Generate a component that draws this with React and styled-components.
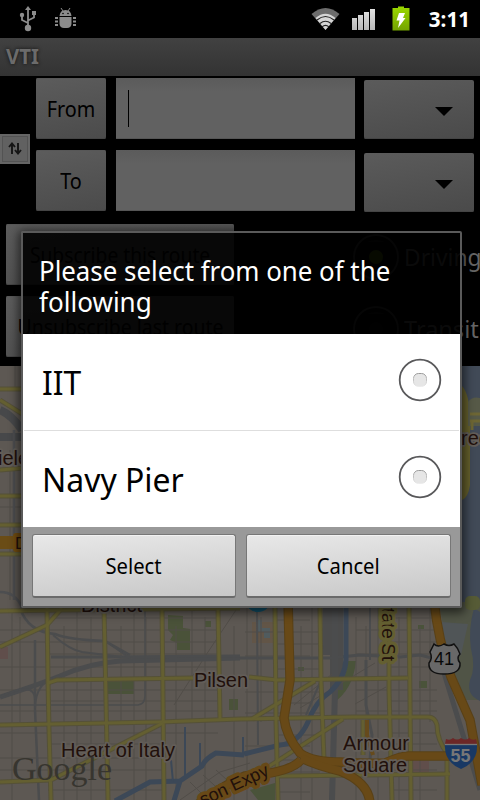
import React from "react";
import styled, { createGlobalStyle } from "styled-components";

const Global = createGlobalStyle`
  * { box-sizing: border-box; }
  body { margin: 0; background: #000; overflow: hidden; }
`;

const Screen = styled.div`
  position: relative;
  width: 480px;
  height: 800px;
  overflow: hidden;
  display: flex;
  flex-direction: column;
  background: #000;
  font-family: "Noto Sans", "Open Sans", sans-serif;
  color: #000;
`;

const Fit = styled.span`
  display: inline-block;
  white-space: nowrap;
  transform: scaleX(${(p) => p.$x});
  transform-origin: ${(p) => p.$from || "center"};
`;

const StatusBar = styled.header`
  height: 38px;
  flex: none;
  display: flex;
  justify-content: space-between;
`;

const StatusIcons = styled.svg`
  display: block;
  width: ${(p) => p.$w}px;
  height: 38px;
`;

const StatusRight = styled.div`
  display: flex;
  padding-right: 10px;
`;

const Clock = styled.time`
  width: 42px;
  color: #fff;
  font-size: 21px;
  font-weight: 700;
  line-height: 38px;
  display: flex;
  justify-content: flex-end;
`;

const TitleBar = styled.div`
  height: 38px;
  flex: none;
  padding-left: 6px;
  background: linear-gradient(#414141, #333);
  color: #6b6b6b;
  font-size: 21px;
  font-weight: 700;
  line-height: 37px;
  text-shadow: 0 0 4px #111;
`;

const RouteForm = styled.section`
  height: 290px;
  flex: none;
  display: flex;
  flex-direction: column;
`;

const Endpoints = styled.div`
  display: flex;
  height: 148px;
`;

const SwapColumn = styled.div`
  width: 36px;
  padding-top: 58px;
`;

const SwapButton = styled.div`
  width: 30px;
  height: 30px;
  padding: 2px;
  background: #656565;
  svg {
    display: block;
    width: 26px;
    height: 26px;
    border: 1px solid #535353;
    background: #616161;
  }
`;

const EndpointRows = styled.div`
  flex: 1;
  padding-top: 2px;
  display: flex;
  flex-direction: column;
  gap: 11px;
`;

const EndpointRow = styled.div`
  display: grid;
  grid-template-columns: 70px 239px 109px;
  column-gap: 10px;
  height: 61px;
`;

const DimButton = styled.div`
  display: flex;
  align-items: center;
  justify-content: center;
  height: 61px;
  border-radius: 2px;
  background: linear-gradient(170deg, #5c5c5c, #4b4b4b);
  box-shadow: inset 0 -1px #444, inset 0 1px #575757;
  font-size: 22px;
  line-height: 30px;
  padding-bottom: 1px;
`;

const Input = styled.div`
  height: 61px;
  padding: 12px 12px;
  background: linear-gradient(#5b5b5b, #616161 14px);
  border-bottom: 1px solid #555;
`;

const Caret = styled.div`
  width: 1px;
  height: 37px;
  background: #000;
`;

const Dropdown = styled.div`
  display: flex;
  justify-content: flex-end;
  align-items: center;
  height: 59px;
  margin: ${(p) => p.$top}px 0 0 -1px;
  padding: 4px 21px 0 0;
  border-radius: 2px;
  background: linear-gradient(170deg, #5b5b5b, #4a4a4a);
  box-shadow: inset 0 -1px #444;
  svg { width: 18px; height: 9px; display: block; }
`;

const Options = styled.div`
  display: grid;
  grid-template-columns: 228px 1fr;
  column-gap: 119px;
  row-gap: 11px;
  padding-left: 6px;
  align-content: start;
`;

const ModeOption = styled.div`
  display: flex;
  align-items: center;
  gap: 5px;
  padding-top: 4px;
  font-size: 24px;
  color: #666;
  white-space: nowrap;
  svg { width: 46px; height: 46px; flex: none; }
`;

const MapView = styled.svg`
  display: block;
  width: 480px;
  height: 434px;
  flex: none;
`;

const Dialog = styled.div`
  position: absolute;
  left: 21px;
  top: 231px;
  width: 441px;
  height: 377px;
  border: 2px solid #5a5a5a;
  border-radius: 2px;
  box-shadow: 0 2px 10px 3px rgba(0, 0, 0, 0.55);
  display: flex;
  flex-direction: column;
`;

const DialogTitle = styled.h1`
  margin: 0;
  height: 101px;
  padding: 22px 16px 0;
  background: rgba(0, 0, 0, 0.9);
  color: #fff;
  font-size: 27px;
  font-weight: 400;
  line-height: 31px;
`;

const TitleLine = styled.div`
  height: 31px;
`;

const Choices = styled.div`
  flex: none;
  padding: 0 1px;
  background: #fff;
`;

const Choice = styled.div`
  height: ${(p) => p.$h}px;
  display: flex;
  align-items: center;
  justify-content: space-between;
  padding: 0 17px 4px 18px;
  font-size: 33px;
  line-height: 40px;
  border-bottom: ${(p) => (p.$line ? "1px solid #dedede" : "0")};
  svg { width: 44px; height: 44px; }
  ${Fit} { margin-top: 6px; }
`;

const Actions = styled.div`
  flex: 1;
  display: grid;
  grid-template-columns: 204px 205px;
  column-gap: 10px;
  padding: 7px 9px;
  background: #999;
`;

const ActionButton = styled.button`
  height: 64px;
  margin: 0;
  padding: 0 0 1px;
  border: 1px solid #777;
  border-bottom: 2px solid #6a6a6a;
  border-radius: 3px;
  background: linear-gradient(175deg, #e8e8e8, #c8c8c8);
  box-shadow: inset 0 1px #f2f2f2;
  font-family: inherit;
  font-size: 22px;
  color: #000;
`;

const Radio = () => (
  <svg viewBox="0 0 44 44">
    <defs>
      <linearGradient id="rim" x2="0" y2="1">
        <stop stopColor="#999" />
        <stop offset="1" stopColor="#ececec" />
      </linearGradient>
    </defs>
    <circle cx="22" cy="22" r="20.3" fill="#fff" stroke="#58585a" strokeWidth="1.8" />
    <rect x="15.500" y="15.500" width="13" height="13" rx="5" fill="#e6e6e6" stroke="url(#rim)" />
  </svg>
);

const DimRadio = ({ on }) => (
  <svg viewBox="0 0 46 46">
    <circle cx="23" cy="23" r="22" fill="#000" stroke="#3c3c3c" strokeWidth="2" />
    <path d="M14 8q9-4 18 0z" fill="#181818" />
    <circle cx="23" cy="23" r="7" fill={on ? "#4b6500" : "#111"} />
  </svg>
);

const Arrow = () => (
  <svg viewBox="0 0 18 9"><path d="M0 0h18L9 9z" fill="#000" /></svg>
);

const STREETS_V = [12, 20, 64, 77, 91, 121, 134, 146, 176, 192, 205, 234, 247, 261, 301, 312, 356, 366, 378, 399, 420, 430];
const STREETS_H = [618, 630, 642, 654, 667, 690, 701, 711, 733, 744, 758, 770, 790];
const MAJOR = [
  "M47 608L48 680L49 730L51 800", "M104 608L106 700L108 800", "M162 608L163 700L164 800", "M218 608L220 720",
  "M0 611L60 610L240 608", "M48 683L57 680L193 678", "M0 725L160 722L240 719L353 717H428Q435 717 437 725Q437 740 447 753",
  "M0 782L51 780L163 723", "M0 647L47 625L62 608", "M275 608L276 720L278 800", "M320 608L321 680L324 760",
  "M389 608V690L392 800", "M409 608L410 700L411 800", "M249 677L277 680L408 678", "M279 776L450 774M447 755V800",
  "M252 719L315 681", "M268 767L343 719", "M363 720V755",
  "M0 389H24M0 400L24 415M0 470L24 468M0 496H24M0 525H24M0 554H24",
];
const FREEWAY = [
  "M288 600L290 680L284 718Q286 736 300 753Q312 762 340 762Q365 764 385 763Q402 755 410 756H454",
  "M190 810Q225 784 245 776Q290 773 301 760", "M301 758Q318 766 340 771Q370 783 370 805",
  "M434 600Q438 640 451 677L470 720L482 785",
];
const RAIL = [
  ["M0 697Q35 686 60 676Q90 663 120 661L240 658", 5],
  ["M51 657H105L240 656", 3], ["M20 608Q28 632 55 634Q70 640 105 641L130 655", 2.5],
  ["M53 635Q70 650 82 652L130 658L105 641", 2], ["M35 640V710L39 800", 2.5],
  ["M0 697Q35 680 35 700M35 710Q35 680 60 676", 1.8], ["M0 705L138 705Q145 704 145 696V608", 1.6],
  ["M240 658L330 658L360 655L400 657L420 655L440 660", 3],
  ["M335 600V690L332 800", 6], ["M366 660V705L372 735L370 760", 3], ["M440 660L480 790", 5],
  ["M257 610L258 745M321 680L306 715M370 600V660", 2],
];

const Label = ({ x, y, children, size = 20, ...rest }) => (
  <text x={x} y={y} fontFamily="Liberation Sans, Arial, sans-serif" fontSize={size} fill="#21100b"
    stroke="#625d58" strokeWidth="3.5" strokeLinejoin="round" paintOrder="stroke" {...rest}>{children}</text>
);

const CityMap = () => (
  <MapView viewBox="0 366 480 434">
    <rect y="366" width="480" height="434" fill="#5d5853" />
    <path d="M438 600H480V700H466L452 668Q445 640 440 608z" fill="#505446" />
    <path d="M441 622L468 624L461 655L448 660z" fill="#505557" />
    <path d="M474 608L480 612V701Q466 695 470 680Q476 668 471 649Q468 630 474 608z" fill="#414a57" />
    <rect x="461" y="366" width="19" height="236" fill="#414a57" />
    <path d="M462 386Q470 395 470 420V485Q468 498 462 500z" fill="#645f2c" />
    <path d="M468 402Q472 396 480 398V426H468z" fill="#565947" />
    <path d="M470 414H480M470 421H480M472 430V422" stroke="#6d6634" strokeWidth="3" />
    <rect x="465" y="596" width="15" height="14" rx="5" fill="#565b36" />
    <path d="M168 615L183 616V628L190 629V650H177V643L170 640L173 635L168 630z M108 681H134V694H108z M229 699H238V710H229z M205 621H211V627H205z" fill="#4a5239" />
    <path d="M348 661H356Q353 690 333 703L337 690Q346 680 348 661z M298 667H304V671H298z M419 681H427V688H419z M418 625H424V629H418z M250 790L275 783V800H258z" fill="#4a533a" />
    <path d="M252 622H275V643H252z" fill="#625547" />
    <path d="M258 620H262V628H270V638H264V632H258z" fill="#505b5e" />
    <path d="M413 761H429V772H413z M0 647H8V659H0z" fill="#604e4b" />
    <path d="M323 608H343V690H330V655H321z" fill="#4b4b4b" />

    <g stroke="#514d48" strokeWidth="1">
      {STREETS_V.map((x, i) => <path key={x} d={`M${x} ${608 + (i % 3) * 9}V${i % 4 === 1 ? 722 : 800}`} />)}
      {STREETS_H.map((y, i) => <path key={y} d={`M${i % 3 ? 0 : 48} ${y}H${i > 8 ? 164 : 218}M${i % 2 ? 245 : 277} ${y + 2}H${i % 3 ? 320 : 310}M${i % 2 ? 356 : 390} ${y}H437`} />)}
      <path d="M174 705L206 655L236 610M300 708L375 663M294 705L337 670M355 704L386 687M180 800L220 772L250 763M190 782L208 800M203 775L225 795M216 770L237 789M0 440H22M0 507H22M10 450V600M0 543H22M15 366V390" fill="none" />
    </g>
    <path d="M0 410Q12 415 22 430M0 437H22" stroke="#47484a" strokeWidth="8" fill="none" />
    <path d="M14 430V600M0 592Q16 592 22 608" stroke="#4d4e50" strokeWidth="2.5" fill="none" />

    {RAIL.map(([d, w]) => <path key={d} d={d} fill="none" stroke="#4b4c4d" strokeWidth={w} />)}

    <g fill="none" stroke="#3c4857">
      <path d="M346 600V660Q345 678 330 692Q315 702 308 722Q298 744 280 745L244 754" strokeWidth="5" />
      <path d="M244 755L216 753Q205 759 202 766L180 781L173 804M115 801L150 782L180 781" strokeWidth="5" />
      <path d="M185 727V778M200 743V766M171 760L173 782M243 737V754" strokeWidth="2" />
    </g>

    <g fill="none" stroke="#555138" strokeWidth="5">{MAJOR.map((d) => <path key={d} d={d} />)}</g>
    <g fill="none" stroke="#645f31" strokeWidth="3">{MAJOR.map((d) => <path key={d} d={d} />)}</g>
    <g fill="none" stroke="#594117" strokeWidth="9.500">{FREEWAY.map((d) => <path key={d} d={d} />)}</g>
    <g fill="none" stroke="#684917" strokeWidth="7.500">{FREEWAY.map((d) => <path key={d} d={d} />)}</g>
    <path d="M367 720V735L373 755" stroke="#664a1c" strokeWidth="4" fill="none" />

    <Label x="-2" y="465">iele</Label>
    <Label x="461" y="445">ree</Label>
    <path d="M0 536H24V549H0z" fill="#6a4c16" />
    <rect x="13" y="533" width="20" height="19" rx="3" fill="#724d11" />
    <Label x="15" y="549" size="17" strokeWidth="0">D</Label>
    <Label x="81" y="612" textLength="61">District</Label>
    <circle cx="258" cy="599" r="13" fill="#11526b" />
    <Label x="194" y="687" textLength="54">Pilsen</Label>
    <Label x="61" y="757" textLength="114">Heart of Italy</Label>
    <Label x="343" y="750" textLength="66">Armour</Label>
    <Label x="343" y="772" textLength="64">Square</Label>
    <Label size="19" transform="translate(382 608) rotate(90)" x="0" y="0" stroke="#645f31" strokeWidth="7" textLength="53">tate St</Label>
    <Label size="18" transform="translate(203 806) rotate(-25)" x="0" y="0" stroke="#684917" strokeWidth="7">son Expy</Label>

    <path d="M434 644Q438 648 444 644Q449 647 454 644Q458 648 460 654Q456 658 460 663Q461 674 444 674Q428 674 429 663Q433 658 430 652z" fill="#686868" stroke="#111" strokeWidth="1.5" />
    <Label x="434" y="665" size="18" strokeWidth="0" fill="#080808">41</Label>
    <path d="M446 739Q450 741 453 738Q457 741 461 738Q466 741 469 738Q473 741 476 739L477 744H445z" fill="#6c2727" />
    <path d="M445 745H477Q478 762 461 769Q444 762 445 745z" fill="#183864" />
    <path d="M445 744.5H477" stroke="#777" strokeWidth="1.3" />
    <Label x="450.500" y="762" size="18" fontWeight="700" fill="#777" strokeWidth="0">55</Label>
    <text x="12" y="780" fontFamily="Liberation Serif, Times New Roman, serif" fontSize="34" fill="#37352f" textLength="100" lengthAdjust="spacingAndGlyphs">Google</text>
  </MapView>
);

const LeftStatus = () => (
  <StatusIcons $w={90} viewBox="0 0 90 38">
    <g stroke="#8c8c8c" fill="none" strokeWidth="1.8">
      <path d="M28 28V8M28 23L22 20V15M28 20.500L34 17.500V13" />
    </g>
    <g fill="#8c8c8c">
      <circle cx="28" cy="28" r="3.200" /><path d="M28 6l-3 4h6z" /><circle cx="22" cy="15" r="2.200" /><path d="M32 11h4v4h-4z" />
      <path d="M59.500 16Q60 10 65.500 10Q71 10 71.500 16z" />
      <path d="M59.500 17H71.500V24Q71 28 67 28H64Q60 28 59.500 24z" />
      <path d="M55 17h3v2h-3zM55 20.500h3v2h-3zM55 24h3v2h-3zM73 17h3v2h-3zM73 20.500h3v2h-3zM73 24h3v2h-3z" />
    </g>
    <path d="M61 8l2 3M70 8l-2 3" stroke="#8c8c8c" />
    <circle cx="63" cy="13.500" r=".8" /><circle cx="68" cy="13.500" r=".8" />
  </StatusIcons>
);

const RightStatus = () => (
  <StatusIcons $w={118} viewBox="310 0 118 38">
    <defs>
      <linearGradient id="bat" x2="0" y2="1"><stop stopColor="#9bd800" /><stop offset="1" stopColor="#73a300" /></linearGradient>
      <linearGradient id="sig" x2="0" y2="1"><stop stopColor="#e2e2e2" /><stop offset="1" stopColor="#b8b8b8" /></linearGradient>
    </defs>
    <path d="M325.500 30L311.500 14Q325.500 2 339.500 14z" fill="#6c6c6c" />
    <path d="M325.500 30L315.500 18Q325.500 9.500 335.500 18z" fill="#d5d5d5" />
    <path d="M317 20Q325.500 13 334 20M320 23.500Q325.500 19 331 23.500M322 27Q325.500 23.800 329 27" fill="none" stroke="#222" strokeWidth="1.1" />
    <path d="M352 18h5v12h-5zM358 15h5v15h-5zM364 12h5v18h-5zM370 9h5v21h-5z" fill="url(#sig)" />
    <path d="M393 8h5V6.500h6V8h5.500v22.500h-17V8z" fill="url(#bat)" />
    <path d="M399 13h6l-2 5h2.500l-7.500 10 1.500-7.500h-3z" fill="#fff" />
  </StatusIcons>
);

const ENDPOINTS = [
  { name: "From", focused: true, top: 2 },
  { name: "To", focused: false, top: 3 },
];

export default function App() {
  return (
    <Screen>
      <Global />
      <StatusBar>
        <LeftStatus />
        <StatusRight>
          <RightStatus />
          <Clock><Fit $x={0.98} $from="right">3:11</Fit></Clock>
        </StatusRight>
      </StatusBar>
      <TitleBar><Fit $x={0.97} $from="left">VTI</Fit></TitleBar>
      <RouteForm>
        <Endpoints>
          <SwapColumn>
            <SwapButton>
              <svg viewBox="0 0 24 24"><path d="M9 17V7M6 10L9 6.500L12 10M15 6V16M12 13L15 16.500L18 13" fill="none" stroke="#151515" strokeWidth="1.9" /></svg>
            </SwapButton>
          </SwapColumn>
          <EndpointRows>
            {ENDPOINTS.map((e) => (
              <EndpointRow key={e.name}>
                <DimButton><Fit $x={0.9}>{e.name}</Fit></DimButton>
                <Input>{e.focused && <Caret />}</Input>
                <Dropdown $top={e.top}><Arrow /></Dropdown>
              </EndpointRow>
            ))}
          </EndpointRows>
        </Endpoints>
        <Options>
          <DimButton><Fit $x={0.875}>Subscribe this route</Fit></DimButton>
          <ModeOption><DimRadio on /><Fit $x={0.95} $from="left">Driving</Fit></ModeOption>
          <DimButton><Fit $x={0.885}>Unsubscribe last route</Fit></DimButton>
          <ModeOption><DimRadio /><Fit $x={0.98} $from="left">Transit</Fit></ModeOption>
        </Options>
      </RouteForm>
      <CityMap />
      <Dialog role="dialog">
        <DialogTitle>
          <TitleLine><Fit $x={0.957} $from="left">Please select from one of the</Fit></TitleLine>
          <TitleLine><Fit $x={0.965} $from="left">following</Fit></TitleLine>
        </DialogTitle>
        <Choices>
          <Choice $h={97} $line><Fit $x={0.965} $from="left">IIT</Fit><Radio /></Choice>
          <Choice $h={96}><Fit $x={0.968} $from="left">Navy Pier</Fit><Radio /></Choice>
        </Choices>
        <Actions>
          <ActionButton><Fit $x={0.92}>Select</Fit></ActionButton>
          <ActionButton><Fit $x={0.92}>Cancel</Fit></ActionButton>
        </Actions>
      </Dialog>
    </Screen>
  );
}
